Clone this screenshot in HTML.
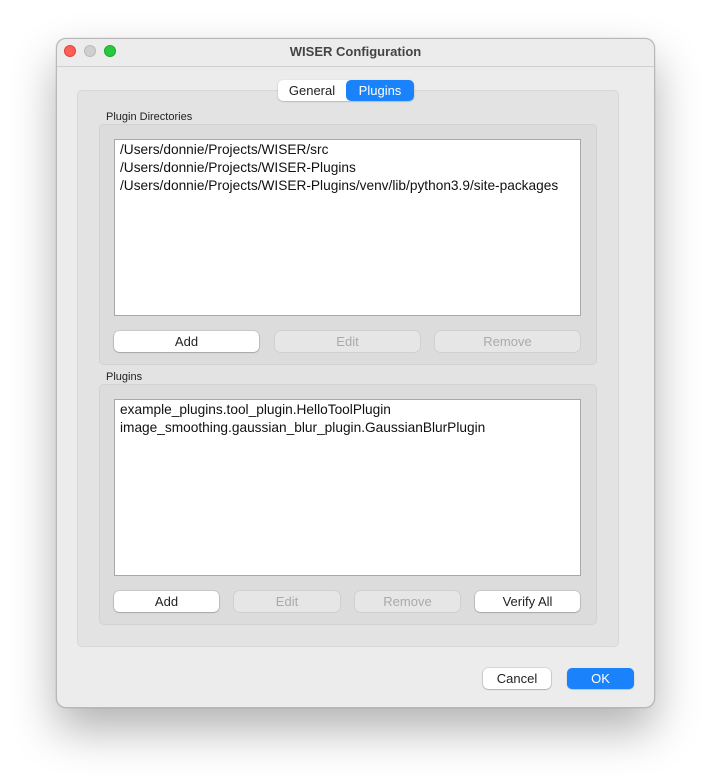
<!DOCTYPE html>
<html><head><style>
*{box-sizing:border-box;margin:0;padding:0}
body{width:711px;height:782px;background:#fff;position:relative;overflow:hidden;font-family:"Liberation Sans",sans-serif;font-size:13px;color:#222}
.a{position:absolute}
.win{left:56px;top:38px;width:599px;height:670px;background:#ececec;border-radius:10px;border:1px solid #b8b8b8;box-shadow:0 22px 45px rgba(0,0,0,.3),0 0 1px rgba(0,0,0,.3);overflow:hidden}
.dot{width:12px;height:12px;border-radius:50%;top:45px}
.box{background:#e3e3e3;border:1px solid #d8d8d8;border-radius:5px}
.grp{background:#dcdcdc;border:1px solid #d2d2d2;border-radius:5px}
.list{background:#fff;border:1px solid #a8a8a8}
.list div{height:18px;line-height:18px;padding-left:5px;font-size:13.7px;color:#111}
.btn{height:21px;background:#fff;border-radius:5px;box-shadow:0 0.5px 1.5px rgba(0,0,0,.35),0 0 0 .5px rgba(0,0,0,.12);text-align:center;line-height:21px;font-size:13px;color:#222}
.dis{background:#e6e6e6;color:#aaa;box-shadow:0 0 0 .5px rgba(0,0,0,.1)}
.lbl{font-size:11px;color:#222}
</style></head><body>
<div class="a win"></div>
<div class="a" style="left:57px;top:66px;width:597px;height:1px;background:#d0d0d0"></div>
<div class="a dot" style="left:64px;background:#fe5f57;border:.5px solid #e0443e"></div>
<div class="a dot" style="left:84px;background:#cfcfcf;border:.5px solid #bbb"></div>
<div class="a dot" style="left:104px;background:#28c840;border:.5px solid #1aab29"></div>
<div class="a" style="left:56px;top:44px;width:599px;text-align:center;font-weight:bold;font-size:13px;color:#444">WISER Configuration</div>

<div class="a box" style="left:77px;top:90px;width:542px;height:557px"></div>
<div class="a" style="left:278px;top:80px;width:136px;height:21px;background:#fff;border-radius:5px;box-shadow:0 .5px 1.5px rgba(0,0,0,.3)"></div>
<div class="a" style="left:278px;top:80px;width:68px;height:21px;line-height:21px;text-align:center;color:#222">General</div>
<div class="a" style="left:346px;top:80px;width:68px;height:21px;line-height:21px;text-align:center;color:#fff;background:#1a82fb;border-radius:5px">Plugins</div>

<div class="a lbl" style="left:106px;top:111px">Plugin Directories</div>
<div class="a grp" style="left:99px;top:124px;width:498px;height:241px"></div>
<div class="a list" style="left:114px;top:139px;width:467px;height:177px;padding-top:1px">
<div>/Users/donnie/Projects/WISER/src</div>
<div>/Users/donnie/Projects/WISER-Plugins</div>
<div>/Users/donnie/Projects/WISER-Plugins/venv/lib/python3.9/site-packages</div>
</div>
<div class="a btn" style="left:114px;top:331px;width:145px">Add</div>
<div class="a btn dis" style="left:275px;top:331px;width:145px">Edit</div>
<div class="a btn dis" style="left:435px;top:331px;width:145px">Remove</div>

<div class="a lbl" style="left:106px;top:371px">Plugins</div>
<div class="a grp" style="left:99px;top:384px;width:498px;height:241px"></div>
<div class="a list" style="left:114px;top:399px;width:467px;height:177px;padding-top:1px">
<div>example_plugins.tool_plugin.HelloToolPlugin</div>
<div>image_smoothing.gaussian_blur_plugin.GaussianBlurPlugin</div>
</div>
<div class="a btn" style="left:114px;top:591px;width:105px">Add</div>
<div class="a btn dis" style="left:234px;top:591px;width:106px">Edit</div>
<div class="a btn dis" style="left:355px;top:591px;width:105px">Remove</div>
<div class="a btn" style="left:475px;top:591px;width:105px">Verify All</div>

<div class="a btn" style="left:483px;top:668px;width:68px">Cancel</div>
<div class="a btn" style="left:567px;top:668px;width:67px;background:#1a82fb;color:#fff;box-shadow:0 .5px 1px rgba(0,0,0,.3)">OK</div>
</body></html>
